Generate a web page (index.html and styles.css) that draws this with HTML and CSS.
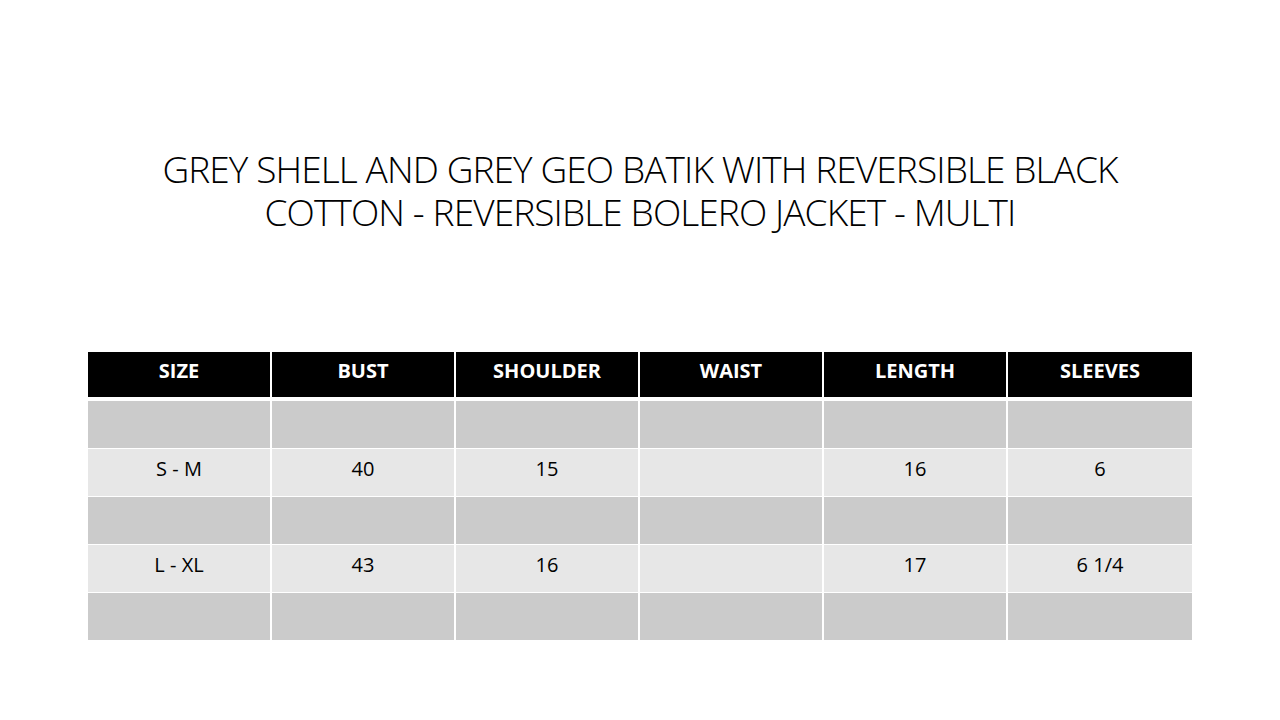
FILE: index.html
```html
<!DOCTYPE html>
<html lang="en">
<head>
<meta charset="utf-8">
<title>Size chart</title>
<link rel="stylesheet" href="styles.css">
</head>
<body>
<main class="slide">
  <h1 class="title">GREY SHELL AND GREY GEO BATIK WITH REVERSIBLE BLACK<br>COTTON - REVERSIBLE BOLERO JACKET - MULTI</h1>
  <table class="sheet">
    <thead>
      <tr class="head">
        <th>SIZE</th><th>BUST</th><th>SHOULDER</th><th>WAIST</th><th>LENGTH</th><th>SLEEVES</th>
      </tr>
    </thead>
    <tbody>
      <tr class="dark"><td></td><td></td><td></td><td></td><td></td><td></td></tr>
      <tr class="light"><td>S - M</td><td>40</td><td>15</td><td></td><td>16</td><td>6</td></tr>
      <tr class="dark"><td></td><td></td><td></td><td></td><td></td><td></td></tr>
      <tr class="light"><td>L - XL</td><td>43</td><td>16</td><td></td><td>17</td><td>6 1/4</td></tr>
      <tr class="dark"><td></td><td></td><td></td><td></td><td></td><td></td></tr>
    </tbody>
  </table>
</main>
</body>
</html>
```
FILE: styles.css
```css
html, body {
  margin: 0;
  padding: 0;
  background: #fff;
}
.slide {
  width: 1280px;
  height: 720px;
  display: flex;
  flex-direction: column;
  align-items: flex-start;
  font-family: "Open Sans", "Liberation Sans", sans-serif;
  color: #000;
}
.title {
  align-self: stretch;
  margin: 147px 0 0 0;
  font-size: 37px;
  font-weight: 300;
  line-height: 43px;
  text-align: center;
  letter-spacing: -0.9px;
}
.sheet {
  margin: 119px 0 0 88px;
  width: 1104px;
  table-layout: fixed;
  border-collapse: separate;
  border-spacing: 0;
  font-size: 20px;
}
.sheet th, .sheet td {
  padding: 0;
  text-align: center;
  border-right: 2px solid #fff;
}
.sheet th:last-child, .sheet td:last-child {
  border-right: 0;
}
.head {
  height: 49px;
}
.head th {
  background: #000;
  color: #fff;
  font-weight: 700;
  padding-bottom: 8px;
  border-bottom: 4px solid #fff;
}
.dark, .light {
  height: 48px;
}
.sheet td {
  padding-bottom: 8px;
  border-bottom: 1px solid #fff;
}
.dark td {
  background: #cbcbcb;
}
.light td {
  background: #e7e7e7;
}
```
